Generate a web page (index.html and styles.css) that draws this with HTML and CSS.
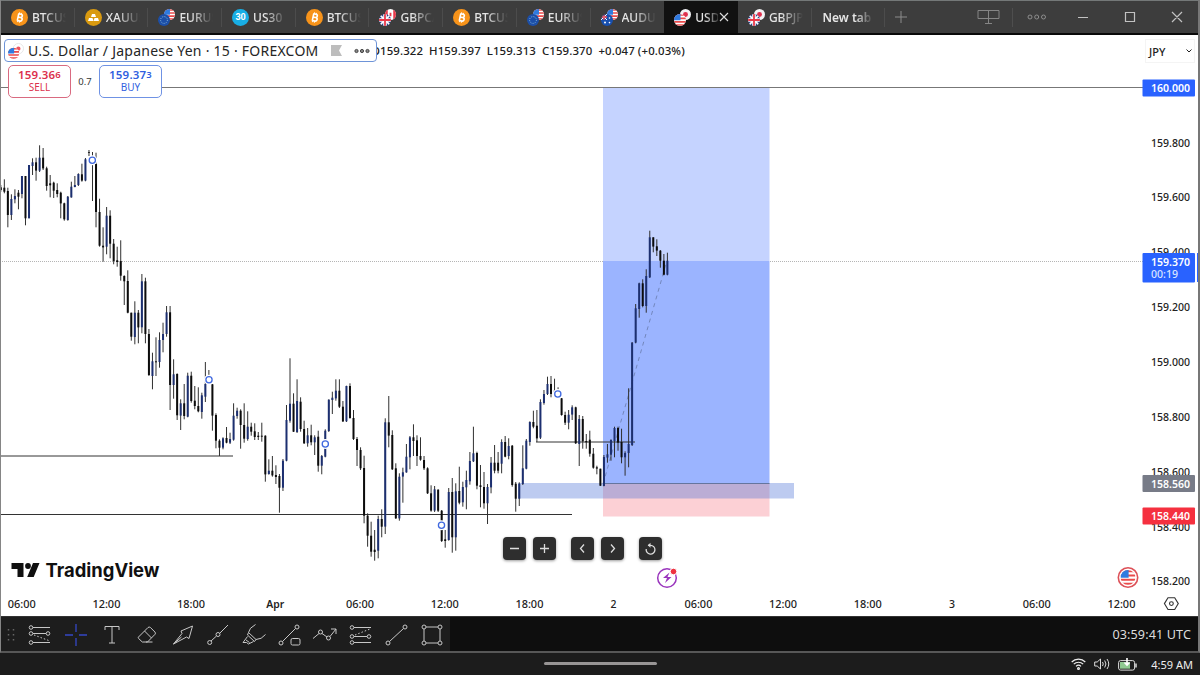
FILE: index.html
```html
<!DOCTYPE html>
<html lang="en">
<head>
<meta charset="utf-8">
<title>USDJPY – TradingView</title>
<link rel="stylesheet" href="styles.css">
</head>
<body>
<svg width="0" height="0" class="defs">
  <defs>
    <clipPath id="disc"><circle cx="6" cy="6" r="6"/></clipPath>
    <symbol id="btc" viewBox="0 0 17 17"><circle cx="8.5" cy="8.5" r="8.5" fill="#f7931a"/><g transform="rotate(12 8.5 8.5)" fill="none" stroke="#fff"><path d="M6.6 5h2.7a1.6 1.6 0 0 1 0 3.3H6.9h2.8a1.8 1.8 0 0 1 0 3.6H6.6M7 5v7" stroke-width="1.6"/><path d="M7.6 3.5v1.5M9.4 3.5v1.5M7.6 12v1.5M9.4 12v1.5"/></g></symbol>
    <symbol id="gold" viewBox="0 0 17 17"><circle cx="8.5" cy="8.5" r="8.5" fill="#d99a10"/><path d="M7 5h3l1 3H6zM4 9h3.5l1 3H3zM9.5 9H13l1 3H8.7z" fill="#fff"/></symbol>
    <symbol id="us" viewBox="0 0 12 12"><g clip-path="url(#disc)"><path fill="#fff" d="M0 0h12v12H0z"/><path d="M0 1h12M0 4.4h12M0 7.8h12M0 11h12" stroke="#ea4b4b" stroke-width="1.7"/><path fill="#2f7be0" d="M0 0h6.5v6.2H0z"/></g></symbol>
    <symbol id="eu" viewBox="0 0 12 12"><circle cx="6" cy="6" r="6" fill="#1c4fa8"/><circle cx="6" cy="6" r="3.4" fill="none" stroke="#8fc0dc" stroke-dasharray="1 1.3"/></symbol>
    <symbol id="gb" viewBox="0 0 12 12"><g clip-path="url(#disc)"><path fill="#31478c" d="M0 0h12v12H0z"/><path d="M0 0l12 12M12 0L0 12" stroke="#fff" stroke-width="1.6"/><path d="M6 0v12M0 6h12" stroke="#fff" stroke-width="3.6"/><path d="M6 0v12M0 6h12" stroke="#e8394a" stroke-width="1.8"/></g></symbol>
    <symbol id="au" viewBox="0 0 12 12"><g clip-path="url(#disc)"><path fill="#174fae" d="M0 0h12v12H0z"/><path d="M0 0l6 6M6 0L0 6" stroke="#fff"/><path d="M3 0v6M0 3h6" stroke="#ef5360" stroke-width="1.3"/><circle cx="4" cy="8.5" r="1" fill="#fff"/><circle cx="8.5" cy="4" r=".8" fill="#fff"/><circle cx="8.5" cy="8.6" r=".8" fill="#fff"/></g></symbol>
    <symbol id="jp" viewBox="0 0 12 12"><circle cx="6" cy="6" r="6" fill="#f3f3f5"/><circle cx="6" cy="6" r="2.7" fill="#e0304e"/></symbol>
    <symbol id="ca" viewBox="0 0 12 12"><g clip-path="url(#disc)"><path fill="#fff" d="M0 0h12v12H0z"/><path fill="#e8394a" d="M0 0h3v12H0zM9 0h3v12H9zM5 4h2v4H5z"/></g></symbol>
  </defs>
</svg>

<div class="window">
  <header class="titlebar">
    <nav class="tabs">
      <div class="tab"><svg class="ico"><use href="#btc"/></svg><span class="name">BTCUSD</span></div>
      <div class="tab"><svg class="ico"><use href="#gold"/></svg><span class="name">XAUUSD</span></div>
      <div class="tab"><svg class="ico"><use href="#us" x="6" y="0" width="11" height="11"/><use href="#eu" x="0" y="5" width="12" height="12"/></svg><span class="name">EURUSD</span></div>
      <div class="tab"><span class="ico index">30</span><span class="name">US30</span></div>
      <div class="tab"><svg class="ico"><use href="#btc"/></svg><span class="name">BTCUSD</span></div>
      <div class="tab"><svg class="ico"><use href="#ca" x="6" y="0" width="11" height="11"/><use href="#gb" x="0" y="5" width="12" height="12"/></svg><span class="name">GBPCAD</span></div>
      <div class="tab"><svg class="ico"><use href="#btc"/></svg><span class="name">BTCUSD</span></div>
      <div class="tab"><svg class="ico"><use href="#us" x="6" y="0" width="11" height="11"/><use href="#eu" x="0" y="5" width="12" height="12"/></svg><span class="name">EURUSD</span></div>
      <div class="tab last-before"><svg class="ico"><use href="#us" x="6" y="0" width="11" height="11"/><use href="#au" x="0" y="5" width="12" height="12"/></svg><span class="name">AUDUSD</span></div>
      <div class="tab active"><svg class="ico"><use href="#jp" x="6" y="0" width="11" height="11"/><use href="#us" x="0" y="5" width="12" height="12"/></svg><span class="name">USDJPY</span><svg class="close" viewBox="0 0 10 10"><path d="M1 1l8 8M9 1L1 9"/></svg></div>
      <div class="tab"><svg class="ico"><use href="#jp" x="6" y="0" width="11" height="11"/><use href="#gb" x="0" y="5" width="12" height="12"/></svg><span class="name">GBPJPY</span></div>
      <div class="tab plain"><span class="name">New tab</span></div>
      <svg class="add" viewBox="0 0 12 12"><path d="M6 0v12M0 6h12"/></svg>
    </nav>
    <svg class="winctl" width="232" height="32" viewBox="0 0 232 32">
      <path d="M12 9.5h21v8H12zM22.500 9.500v13M19 22.500h7" stroke="#858585"/>
      <path d="M46.500 7v19" stroke="#4e4e4e"/>
      <g stroke="#8d8d8d"><circle cx="64" cy="16" r="2"/><circle cx="70.700" cy="16" r="2"/><circle cx="77.500" cy="16" r="2"/></g>
      <path d="M112 16.500h10M159.500 11.500h9v9h-9zM206 11l10 10M216 11l-10 10" stroke="#c2c2c2" stroke-width="1.200"/>
    </svg>
  </header>

  <main class="chart">
    <svg id="plot" class="plot" width="1200" height="581" viewBox="0 35 1200 581"></svg>
    <div class="legend">
      <div class="row">
        <div class="symbol">
          <svg class="pair" viewBox="0 0 17 17"><circle cx="11" cy="6" r="5.500" fill="#fff" stroke="#e5e5e5"/><circle cx="11" cy="6" r="2.300" fill="#ef5360"/><use href="#us" x="0" y="5" width="12" height="12"/></svg>
          <span class="title">U.S. Dollar / Japanese Yen · 15 · FOREXCOM</span>
          <svg class="flag" viewBox="0 0 11 11"><path d="M0 0h11L8 5.500 11 11H0z" fill="#bdbdbd"/></svg>
          <svg class="more" viewBox="0 0 16 6"><circle cx="2.500" cy="3" r="1.600"/><circle cx="8" cy="3" r="1.600"/><circle cx="13.500" cy="3" r="1.600"/></svg>
        </div>
        <div class="ohlc"><span>O159.322</span><span>H159.397</span><span>L159.313</span><span>C159.370</span><span>+0.047 (+0.03%)</span></div>
      </div>
      <div class="row quotes">
        <div class="quote sell"><b>159.36<i>6</i></b><span>SELL</span></div>
        <div class="spread">0.7</div>
        <div class="quote buy"><b>159.37<i>3</i></b><span>BUY</span></div>
      </div>
    </div>
    <div class="currency"><span>JPY</span><svg viewBox="0 0 6 4"><path d="M.5.500L3 3 5.500.500"/></svg></div>
    <div class="nav">
      <svg viewBox="0 0 23 23"><path d="M7 11.500h9"/></svg>
      <svg viewBox="0 0 23 23"><path d="M7 11.500h9M11.500 7v9"/></svg>
      <svg class="gap" viewBox="0 0 23 23"><path d="M13 7.500l-3.500 4 3.500 4"/></svg>
      <svg viewBox="0 0 23 23"><path d="M10 7.500l3.500 4-3.500 4"/></svg>
      <svg class="gap" viewBox="0 0 23 23"><path d="M7.200 12a4.400 4.400 0 1 0 4.300-3.700H9"/><path d="M11.500 5.800L8.700 8.300l2.800 2.500z" fill="#ddd" stroke="none"/></svg>
    </div>
  </main>

  <footer class="toolbar">
    <div class="tools">
      <svg class="grip" viewBox="0 0 8 14"><path d="M1.500 1v13M6.500 1v13" stroke-dasharray="1.500 3.500" stroke-width="1.500"/></svg>
      <svg viewBox="0 0 24 24"><path d="M5 4.500h17M5 10.500h13M5 19.500h17"/><path d="M6 12l16 6" stroke-dasharray="1.500 2"/><circle cx="3" cy="4.500" r="1.800"/><circle cx="3" cy="10.500" r="1.800"/><circle cx="20" cy="10.500" r="1.800"/><circle cx="3" cy="19.500" r="1.800"/></svg>
      <svg class="cross" viewBox="0 0 24 24"><path d="M12 1v8M12 15v8M1 12h8M15 12h8"/></svg>
      <svg viewBox="0 0 24 24"><path d="M5 7V3.500h14V7M12 3.500v16.500M9 20h6"/></svg>
      <svg viewBox="0 0 24 24"><path d="M3.500 14L13 4.500q1.200-1 2.400 0l4.600 4.600q1 1 0 2.200L12.500 19H7.300l-3.800-3.600q-.6-.7 0-1.400zM9.500 8l7 7M11 19h6.500"/></svg>
      <svg viewBox="0 0 24 24"><path d="M2.500 21L11 10.500 10 8 21.500 3 18 15.500l-2.500-1.500L2.500 21zM2.500 21l8-7"/></svg>
      <svg viewBox="0 0 24 24"><path d="M5 18l5.500-5M13.500 10.500L22 2"/><circle cx="3.700" cy="19.500" r="2"/><circle cx="12" cy="11.500" r="2"/></svg>
      <svg viewBox="0 0 24 24"><path d="M13.500 1.500Q7 5 6.500 9.500l7.500 7q5.500 0 9.500-5M6.500 9.500l-1 2.500 7 6.500 1.500-2M5.500 13.500l-4.500 6h3.500l2 1.500 5-2.500M4 17l3.500 2.500"/></svg>
      <svg viewBox="0 0 24 24"><path d="M4.500 18.500L17.500 5.500"/><circle cx="3" cy="20" r="2"/><circle cx="19" cy="4" r="2"/><rect x="13" y="15.500" width="9" height="6.500" rx="1.500"/></svg>
      <svg viewBox="0 0 24 24"><path d="M0 15.500l6-5M9 10.500l5 3.500M17 13.500L23 6M18 6h5v5"/><circle cx="7.500" cy="9" r="2"/><circle cx="15.500" cy="15" r="2"/></svg>
      <svg viewBox="0 0 24 24"><path d="M5 4.500h17M5 13.500h13M5 19.500h17"/><path d="M6 12l15-6" stroke-dasharray="1.500 2"/><circle cx="3" cy="4.500" r="1.800"/><circle cx="3" cy="13.500" r="1.800"/><circle cx="20" cy="13.500" r="1.800"/><circle cx="3" cy="19.500" r="1.800"/></svg>
      <svg viewBox="0 0 24 24"><path d="M4.500 18.500L18.500 5.500"/><circle cx="3" cy="20" r="2"/><circle cx="20" cy="4" r="2"/></svg>
      <svg viewBox="0 0 24 24"><path d="M6 4h12M6 20h12M4 6v12M20 6v12"/><circle cx="4" cy="4" r="2"/><circle cx="20" cy="4" r="2"/><circle cx="4" cy="20" r="2"/><circle cx="20" cy="20" r="2"/></svg>
    </div>
    <span class="utc">03:59:41 UTC</span>
  </footer>
</div>

<div class="taskbar">
  <div class="handle"></div>
  <div class="tray">
    <svg class="wifi" viewBox="0 0 15 12"><path d="M.7 4a9.600 9.600 0 0 1 13.600 0M2.800 6.200a6.600 6.600 0 0 1 9.400 0M5 8.400a3.600 3.600 0 0 1 5 0"/><circle cx="7.500" cy="10.500" r=".9"/></svg>
    <svg class="sound" viewBox="0 0 16 12"><path d="M.7 4h2.500l3.300-3v10L3.200 8H.7zM8.500 4q1.500 2 0 4M10.700 2.500q2.500 3.500 0 7M13 1q3.500 5 0 10"/></svg>
    <svg class="battery" viewBox="0 0 19 13"><rect x=".6" y="2.600" width="16" height="9.500" rx="2" fill="none" stroke="#ddd"/><rect x="2" y="4" width="10" height="6.700" fill="#8fca91"/><path d="M18 5.500v4" stroke="#ddd" stroke-width="1.500"/><path d="M9 0v7M6.500 4.500L9 7l2.500-2.500" fill="none" stroke="#fff" stroke-width="1.600"/></svg>
    <span>4:59 AM</span>
  </div>
</div>
<script src="chart.js"></script>
</body>
</html>
```
FILE: styles.css
```css
* { box-sizing: border-box; }
body { margin: 0; width: 1200px; height: 675px; overflow: hidden; background: #1c1c1c; font-family: "Noto Sans", "Open Sans", sans-serif; display: flex; flex-direction: column; }
.defs { position: absolute; }
.window { height: 653px; display: flex; flex-direction: column; background: #111; border-left: 1px solid #858585; border-right: 2px solid #777; border-bottom: 2px solid #575757; }
.titlebar { height: 35px; flex: none; display: flex; justify-content: space-between; background: #3d3d3d; border-top: 1px solid #747878; border-bottom: 2px solid #090909; }
.tabs { display: flex; align-items: stretch; }
.tab { width: 73.7px; position: relative; display: flex; align-items: center; padding-left: 10px; gap: 4px; color: #e5e5e5; font-size: 12px; font-weight: 500; }
.tab::after { content: ""; position: absolute; right: 0; top: 7px; height: 19px; width: 1px; background: #4c4c4c; }
.last-before::after, .active::after { display: none; }
.ico { width: 17px; height: 17px; flex: none; }
.index { border-radius: 50%; background: #18aee5; color: #fff; font: bold 9px/17px Roboto, sans-serif; text-align: center; }
.name { width: 34px; overflow: hidden; white-space: nowrap; -webkit-mask-image: linear-gradient(90deg, #000 35%, transparent 100%); mask-image: linear-gradient(90deg, #000 35%, transparent 100%); }
.active { background: #111; }
.active .name { width: 23px; -webkit-mask-image: linear-gradient(90deg, #000 40%, #0003 100%); mask-image: linear-gradient(90deg, #000 40%, #0003 100%); }
.active .close { width: 10px; height: 10px; margin-left: -3px; stroke: #ddd; stroke-width: 1.1; }
.plain { padding-left: 11px; }
.plain .name { width: 50px; font-weight: 600; -webkit-mask-image: linear-gradient(90deg, #000 65%, transparent); mask-image: linear-gradient(90deg, #000 65%, transparent); }
.add { width: 12px; margin-left: 10px; stroke: #8c8c8c; }
.winctl { fill: none; }
.chart { position: relative; height: 581px; background: #fff; overflow: hidden; }
.plot { display: block; margin-left: -1px; }
.plot text { font-size: 11px; font-weight: 500; fill: #222; }
.plot .tag { fill: #fff; font-weight: 600; }
.plot .countdown { fill: #dce4ff; }
.plot .month { font-weight: 600; }
.plot .brand { font: 700 19px Inter, sans-serif; fill: #101010; }
.legend { position: absolute; left: 3px; top: 4px; }
.row { display: flex; align-items: center; }
.symbol { width: 373px; height: 23px; border: 1px solid #6e94d8; border-radius: 4px; background: #fff; display: flex; align-items: center; padding-left: 3px; position: relative; z-index: 1; }
.pair { width: 16px; height: 16px; }
.title { width: 300px; padding-left: 4px; font-size: 14px; letter-spacing: .24px; white-space: nowrap; color: #252525; }
.flag { width: 11px; height: 11px; margin-left: 7px; }
.more { width: 16px; height: 6px; margin-left: 12px; fill: #888; stroke: #444; }
.ohlc { display: flex; gap: 6px; margin-left: -6px; font-size: 11.4px; font-weight: 500; letter-spacing: .12px; color: #202020; white-space: nowrap; }
.quotes { margin: 3px 0 0 4px; }
.quote { width: 63px; height: 33px; border: 1px solid #d96a80; border-radius: 5px; background: #fff; color: #dc314d; text-align: center; display: flex; flex-direction: column; font-size: 10px; line-height: 12px; padding-top: 2px; }
.quote b { font-size: 11.5px; line-height: 13px; font-weight: 600; letter-spacing: .2px; }
.quote i { font-size: 9.5px; font-style: normal; vertical-align: 1px; }
.buy { color: #315fe0; border-color: #6f92e4; }
.spread { width: 28px; height: 14px; background: #fff; text-align: center; font-size: 9.5px; line-height: 14px; color: #333; }
.currency { position: absolute; right: 3px; top: 4px; width: 50px; height: 24px; border: 1px solid #f4f4f4; display: flex; align-items: center; justify-content: space-between; padding: 0 2px 0 3px; font-size: 11px; font-weight: 500; color: #222; }
.currency svg { width: 6px; height: 4px; fill: none; stroke: #222; }
.nav { position: absolute; left: 502px; top: 502px; display: flex; gap: 7px; }
.nav svg { width: 23px; height: 23px; border-radius: 4px; background: #2e2e2e; box-shadow: 0 1px 3px #0006; fill: none; stroke: #ddd; stroke-width: 1.3; }
.nav .gap { margin-left: 8px; }
.toolbar { flex: 1; display: flex; align-items: center; justify-content: space-between; background: #0e0e0e; padding-right: 7px; border-top: 1px solid #333; }
.tools { align-self: stretch; width: 449px; background: #1d1d1d; display: flex; align-items: center; gap: 11.65px; padding: 1px 0 0 6px; }
.tools svg { width: 24px; height: 24px; fill: none; stroke: #c7c7c7; flex: none; }
.tools .grip { width: 8px; height: 14px; stroke: #666; margin-right: 1.6px; }
.tools .cross { stroke: #3447c5; stroke-width: 1.3; }
.utc { font-size: 12.6px; letter-spacing: .12px; color: #ddd; }
.taskbar { flex: 1; display: grid; grid-template-columns: 1fr 113px 1fr; align-items: center; }
.handle { grid-column: 2; height: 3px; border-radius: 2px; background: #989595; margin-bottom: 2px; }
.tray { justify-self: end; display: flex; align-items: center; gap: 8px; padding-right: 7px; font-size: 11px; color: #eee; }
.tray .wifi { width: 15px; height: 12px; fill: none; stroke: #eee; stroke-width: 1.2; }
.tray .sound { width: 16px; height: 12px; fill: none; stroke: #ddd; }
.tray .battery { width: 19px; height: 13px; margin-right: 6px; }
```
FILE: chart.js
```js
// Candle runs: each has a vertical origin and rows of high, open/close top, bottom, low (thirds of a pixel).
// A trailing "b" marks a rising candle.
const runs = [
  [130, `165 172 180 185|148 173 185 190|173 183 255 292|193 207 255 270b|178 198 208 220b|180 188 200 238|138 138 192 205b|138 138 265 286|105 105 265 265b|85 97 108 135b|83 97 122 152|46 83 122 126b|54 83 115 120|110 115 168 182|135 160 166 202|155 158 182 204|160 180 192 202|185 188 220 265|218 220 268 272|198 200 270 272b|155 170 202 203b|138 165 171 172b|130 132 165 168b|101 133 152 155|84 88 152 154b|60 66 66 78|66 85 100 213|68 102 246 292|206 246 347 350|292 347 352 395|231 257 350 373b|241 257 341 385|327 341 393 403|350 391 396 410|331 393 437 452|436 438 454 525|421 453 548 550|548 548 620 632|514 548 621 643b|540 548 592 640|432 454 592 610b|443 454 612 640|597 612 735 738`],
  [340, `38 64 108 148b|-8 64 67 108|-23 0 66 83b|-52 -18 0 37b|-102 -83 -18 -10b|-102 -83 135 210|58 103 135 176b|100 102 226 240|178 190 227 270b|132 190 228 238|98 107 230 232b|95 107 183 188|138 182 198 208|142 198 214 217|158 166 216 236b|66 132 170 186b|90 110 130 132|132 133 227 272|220 225 302 325|298 302 323 348|292 295 323 328b|261 294 308 310|278 297 308 312b|190 227 299 302b|203 212 228 236b|208 212 255 326|190 255 296 308|214 260 297 302b|248 260 275 287|250 274 291 300|276 287 291 300|248 287 290 305|286 287 403 425|358 392 402 404b|348 392 406 410|376 405 411 432|402 408 443 518|357 362 443 453b|195 240 362 364b|55 191 242 248b|160 191 275 276|118 183 276 279b|172 185 267 275|242 267 310 312|264 286 310 320b|254 286 307 316|286 292 307 345b|272 290 377 395|345 348 377 403b|268 272 350 352b|178 179 273 276b|155 173 180 222b|118 152 175 182b|118 152 200 204|183 200 244 246|137 138 244 246b|130 138 234 236|210 234 297 300|291 297 330 378|322 330 385 390|347 384 527 550|520 527 587 620|545 587 635 650|570 629 636 662|527 537 632 655b|508 537 560 592|235 247 560 582b`],
  [360, `108 187 227 262|211 225 328 330|310 325 475 477|340 350 475 482b|323 337 350 428b|252 290 337 338b|228 232 292 328b|193 232 243 288|226 241 288 318|232 288 299 302|288 300 325 330|322 325 400 402|376 400 452 455|378 388 452 456b|388 389 452 456|450 452 543 546|510 538 543 563|384 396 540 542b|354 396 532 578|370 394 532 572b|320 393 428 433|365 381 427 440b|332 360 382 448b|276 303 364 374b|200 280 304 306b|275 279 377 388|315 376 381 442|336 381 430 446|372 381 430 492b|291 308 382 400b|255 308 332 340|276 308 332 340|238 246 311 340b|228 246 290 292|235 258 288 298b|255 257 375 380|366 371 416 455|367 371 416 438b|256 325 372 375b|237 242 326 328b|184 186 246 257b|152 186 200 205|150 197 235 246|118 126 233 237b|90 102 129 134b|50 72 102 105b|48 72 102 112|56 92 92 92|82 90 112 113|114 115 165 167|155 165 188 195|150 164 188 208b|136 142 164 180b|140 142 250 252|165 177 252 318b|168 177 244 266|222 243 247 266|212 239 281 290|264 281 323 326|317 322 326 343|326 326 377 378|285 291 378 379b|252 283 293 308b|238 240 284 302b|200 204 243 292b|200 204 248 272|206 246 292 310|274 279 292 347b|85 252 279 322b`],
  [220, `366 368 675 678b|252 265 368 370b|188 190 267 293b|178 190 258 262|148 168 258 278b|32 52 172 174b|52 52 80 97|58 79 92 108|90 92 122 143|102 122 164 166|98 122 164 166b`]
];
const out = [];
const rect = (x, y, w, h, fill, extra = '') => out.push(`<rect x="${x}" y="${y}" width="${w}" height="${h}" fill="${fill}" ${extra}/>`);
const line = (x1, y1, x2, y2, stroke, extra = '') => out.push(`<line x1="${x1}" y1="${y1}" x2="${x2}" y2="${y2}" stroke="${stroke}" ${extra}/>`);
const text = (s, x, y, w, cls = '') => out.push(`<text x="${x}" y="${y}" textLength="${w}" lengthAdjust="spacingAndGlyphs" class="${cls}">${s}</text>`);

// position tool and zones
line(0, 261.5, 1143, 261.5, '#b5b5b5', 'stroke-dasharray="1 1"');
rect(603, 87, 166.5, 174, '#c5d3ff');
rect(603, 261, 166.5, 222.5, '#9bb4ff');
rect(603, 483.5, 166.5, 33, '#fcd0d5');
rect(518, 483, 276, 15.5, '#4d73d6', 'opacity=".37"');
line(603, 483.5, 769.5, 483.5, '#65759e');
line(0, 87.5, 1143, 87.5, '#777');
line(0, 456, 233, 456, '#333');
line(0, 514.5, 572, 514.5, '#333');
line(536, 442, 635, 442, '#333');
line(603, 484, 666, 264, '#7387bd', 'stroke-dasharray="4 4"');

let i = 0;
for (const [top, rows] of runs) {
  for (const row of rows.split('|')) {
    const [hi, a, b, lo] = row.replace('b', '').split(' ').map(v => top + v / 3);
    const x = 0.8 + 3.527 * i++;
    line(x.toFixed(2), hi.toFixed(1), x.toFixed(2), lo.toFixed(1), '#303030');
    rect((x - 1).toFixed(2), a.toFixed(1), 2, Math.max(0.8, b - a).toFixed(1), row.endsWith('b') ? '#1c2f70' : '#0c0c0c');
  }
}
for (const [x, y] of [[92.3, 160.3], [209, 379.7], [325.3, 444], [441.5, 525.3], [557.8, 394]])
  out.push(`<circle cx="${x}" cy="${y}" r="5" fill="#fff"/><circle cx="${x}" cy="${y}" r="3.1" fill="#fff" stroke="#4069df" stroke-width="1.3"/>`);

// price scale
for (let k = 0; k < 9; k++) text((159.8 - k * 0.2).toFixed(3), 1151, 146.5 + k * 54.86, 39);
const tag = (label, y, fill, h = 17) => {
  rect(1142.5, y, 52.5, h, fill, 'rx="1"');
  text(label, 1151, y + 12.5, 39, 'tag');
};
tag('160.000', 79.5, '#2962ff');
tag('159.370', 253, '#2962ff', 29.5);
text('00:19', 1151, 278, 27, 'countdown');
tag('158.560', 475, '#777b87');
tag('158.440', 507.5, '#f5303f');
rect(1197, 253, 3, 29, '#2962ff');

// time scale
[['06:00', 21.7], ['12:00', 106.4], ['18:00', 191], ['Apr', 275.3], ['06:00', 360], ['12:00', 444.8], ['18:00', 529.4], ['2', 613.6], ['06:00', 698.4], ['12:00', 783], ['18:00', 867.8], ['3', 952], ['06:00', 1036.7], ['12:00', 1121.4]]
  .forEach(([s, x]) => { const w = s.length === 5 ? 28 : s.length === 3 ? 18 : 6; text(s, x - w / 2, 607.5, w, s === 'Apr' ? 'month' : ''); });

// brand
out.push('<path d="M11.5 563h12v14h-6v-8h-6zM33 563h6.5l-5.8 14h-6.5z" fill="#101010"/><circle cx="28" cy="566" r="2.9" fill="#101010"/>');
text('TradingView', 45.5, 577, 114, 'brand');

// event markers and settings
out.push('<circle cx="667" cy="578" r="9.3" fill="#fff" stroke="#9a35bd" stroke-width="1.5"/><path d="M669.5 572.5l-6.5 5.500h4l-2 5 6.500-6h-4z" fill="#9a35bd"/><circle cx="673.5" cy="571.5" r="3.3" fill="#ef3340" stroke="#fff"/>');
out.push('<circle cx="1128" cy="577.5" r="9.7" fill="#fff" stroke="#dd5158" stroke-width="1.6"/><use href="#us" x="1120.5" y="570" width="15" height="15"/>');
out.push('<path d="M1168 597.7h6.7l3.6 5.9-3.6 5.9h-6.7l-3.6-5.9z" fill="none" stroke="#333" stroke-width="1.1"/><circle cx="1171.4" cy="603.6" r="1.9" fill="none" stroke="#333" stroke-width="1.1"/>');
document.getElementById('plot').innerHTML = out.join('');
```
